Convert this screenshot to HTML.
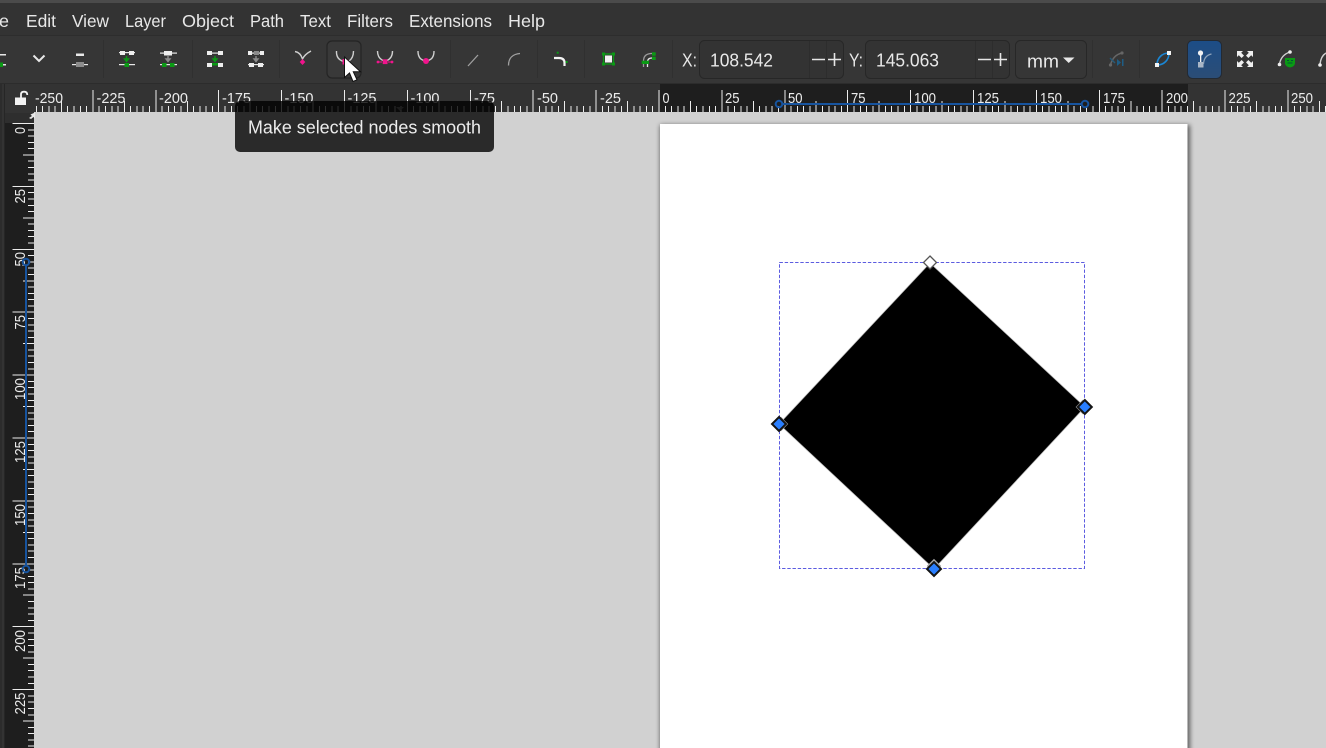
<!DOCTYPE html>
<html><head><meta charset="utf-8"><style>
html,body{margin:0;padding:0;background:#333;overflow:hidden;width:1326px;height:748px}
svg{display:block}
text{font-family:"Liberation Sans",sans-serif}
.m{font-size:17.5px;fill:#e8e8e8}
.r{font-size:15px;fill:#ececec}
.n{font-size:18px;fill:#e8e8e8}
</style></head><body>
<svg width="1326" height="748" viewBox="0 0 1326 748" xmlns="http://www.w3.org/2000/svg">
<defs>
<g id="h" stroke="#ececec" stroke-width="1" shape-rendering="crispEdges">
<path d="M0 90V112M6.29 106V112M12.58 106V112M18.87 106V112M25.16 106V112M31.45 101V112M37.74 106V112M44.03 106V112M50.32 106V112M56.61 106V112"/>
</g>
<g id="v" stroke="#ececec" stroke-width="1" shape-rendering="crispEdges">
<path d="M12.5 0H34M28 6.29H34M28 12.58H34M28 18.87H34M28 25.16H34M23 31.45H34M28 37.74H34M28 44.03H34M28 50.32H34M28 56.61H34"/>
</g>
<filter id="b" x="-10%" y="-10%" width="120%" height="120%"><feGaussianBlur stdDeviation="2.5"/></filter>
<linearGradient id="act" x1="0" y1="0" x2="0" y2="1"><stop offset="0" stop-color="#1c4d87"/><stop offset="1" stop-color="#2b4d76"/></linearGradient>
</defs>

<!-- chrome -->
<rect width="1326" height="748" fill="#333"/>
<rect width="1326" height="3" fill="#4b4b4b"/>
<rect y="35" width="1326" height="1" fill="#2d2d2d"/>
<rect y="36" width="1326" height="47" fill="#363636"/>
<rect y="83" width="1326" height="1" fill="#2c2c2c"/>

<!-- menu -->
<text class="m" x="-1" y="27" textLength="10" lengthAdjust="spacingAndGlyphs">e</text>
<text class="m" x="26" y="27" textLength="30" lengthAdjust="spacingAndGlyphs">Edit</text>
<text class="m" x="72" y="27" textLength="37" lengthAdjust="spacingAndGlyphs">View</text>
<text class="m" x="125" y="27" textLength="41" lengthAdjust="spacingAndGlyphs">Layer</text>
<text class="m" x="182" y="27" textLength="52" lengthAdjust="spacingAndGlyphs">Object</text>
<text class="m" x="250" y="27" textLength="34" lengthAdjust="spacingAndGlyphs">Path</text>
<text class="m" x="300" y="27" textLength="31" lengthAdjust="spacingAndGlyphs">Text</text>
<text class="m" x="347" y="27" textLength="46" lengthAdjust="spacingAndGlyphs">Filters</text>
<text class="m" x="409" y="27" textLength="83" lengthAdjust="spacingAndGlyphs">Extensions</text>
<text class="m" x="508" y="27" textLength="37" lengthAdjust="spacingAndGlyphs">Help</text>

<!-- separators -->
<g fill="#303030">
<rect x="103" y="40" width="1" height="38"/><rect x="192" y="40" width="1" height="38"/><rect x="279" y="40" width="1" height="38"/>
<rect x="450" y="40" width="1" height="38"/><rect x="537" y="40" width="1" height="38"/><rect x="584" y="40" width="1" height="38"/>
<rect x="672" y="40" width="1" height="38"/><rect x="1092" y="40" width="1" height="38"/><rect x="1139" y="40" width="1" height="38"/>
</g>

<!-- align icons -->
<g>
<rect x="0" y="54" width="6" height="1.5" fill="#e8e8e8"/><rect x="0" y="64" width="6" height="1.5" fill="#e8e8e8"/><rect x="0" y="62.5" width="3" height="4.5" fill="#0a9a14"/>
<path d="M33.5 55.5L39 61L44.5 55.5" fill="none" stroke="#e8e8e8" stroke-width="2"/>
<rect x="76" y="53.5" width="8" height="2.5" fill="#e8e8e8"/><rect x="72" y="64" width="16" height="1.2" fill="#e8e8e8"/><rect x="76" y="62" width="8" height="5" fill="#8c8c8c"/>

<rect x="119" y="52" width="16" height="1.2" fill="#e8e8e8"/><rect x="120" y="51" width="5" height="4" fill="#eee"/><rect x="129" y="51" width="5" height="4" fill="#eee"/>
<path d="M126.5 56V59M124.5 59L126.5 61.5L128.5 59Z" stroke="#0a9a14" stroke-width="1.4" fill="#0a9a14"/>
<rect x="119" y="64" width="16" height="1.2" fill="#e8e8e8"/><rect x="124.5" y="63" width="4.5" height="4" fill="#0a9a14"/>

<rect x="160" y="52.5" width="17" height="1.2" fill="#e8e8e8"/><rect x="164" y="51" width="8" height="4.5" fill="#eee"/>
<path d="M168 56V59M166 59L168 61.5L170 59Z" stroke="#8c8c8c" stroke-width="1.4" fill="#8c8c8c"/>
<rect x="160" y="64" width="17" height="1.2" fill="#e8e8e8"/><rect x="162" y="63" width="4.5" height="4" fill="#0a9a14"/><rect x="170" y="63" width="4.5" height="4" fill="#0a9a14"/>

<rect x="207" y="52.5" width="16" height="1.2" fill="#e8e8e8"/><rect x="207" y="51" width="5" height="4" fill="#eee"/><rect x="218" y="51" width="5" height="4" fill="#eee"/>
<path d="M215 56V59M213 59L215 61.5L217 59Z" stroke="#0a9a14" stroke-width="1.4" fill="#0a9a14"/>
<rect x="207" y="64" width="16" height="1.2" fill="#e8e8e8"/><rect x="207" y="63" width="5" height="4" fill="#eee"/><rect x="218" y="63" width="5" height="4" fill="#eee"/><rect x="212" y="63" width="6" height="2.5" fill="#0a9a14"/>

<rect x="248" y="52.5" width="16" height="1.2" fill="#e8e8e8"/><rect x="248" y="51" width="4" height="4" fill="#eee"/><rect x="254" y="51" width="5" height="4" fill="#8c8c8c"/><rect x="260" y="51" width="4" height="4" fill="#eee"/>
<path d="M256 56V59M254 59L256 61.5L258 59Z" stroke="#8c8c8c" stroke-width="1.4" fill="#8c8c8c"/>
<rect x="248" y="64" width="16" height="1.2" fill="#e8e8e8"/><rect x="249" y="63" width="5" height="4" fill="#eee"/><rect x="258" y="63" width="5" height="4" fill="#eee"/>
</g>

<!-- node type icons -->
<rect x="327" y="41" width="34" height="37" rx="5" fill="#393939" stroke="#242424" stroke-width="1.2"/>
<g fill="none" stroke="#cfcfcf" stroke-width="1.4">
<path d="M295 51.5Q300.500 52.500 302.500 59Q304.500 54.500 311 51"/>
<path d="M336.500 51Q336 59.500 344 61.500"/>
<path d="M353.500 51Q353.500 58 349 61"/>
<path d="M377.500 51Q377.500 58 383 60.500"/>
<path d="M392.500 51Q392.500 58 387 60.500"/>
<path d="M418 51Q418 59 424 60.500"/>
<path d="M434 51Q434 59 428 60.500"/>
</g>
<path d="M302.500 59L305.300 62L302.500 65L299.700 62Z" fill="#f0148c"/>
<rect x="342.500" y="59" width="5.500" height="5.500" fill="#f0148c"/>
<rect x="382.700" y="59.300" width="4.800" height="4.800" fill="#f0148c"/>
<path d="M378 62H382M388 62H392" stroke="#f0148c" stroke-width="1.100"/>
<circle cx="378" cy="62" r="1.400" fill="#f0148c"/><circle cx="392" cy="62" r="1.400" fill="#f0148c"/>
<circle cx="426" cy="61" r="3" fill="#f0148c"/>
<path d="M468 66L478 55" stroke="#a0a0a0" stroke-width="1.3" fill="none"/>
<path d="M508.500 65.500C508.500 58 513 54 520 53.500" stroke="#a0a0a0" stroke-width="1.3" fill="none"/>
<path d="M554 58H559Q564.500 58 564.500 63V66" stroke="#f4f4f4" stroke-width="2.200" fill="none"/>
<rect x="556.700" y="51.700" width="2" height="2" fill="#0a9a14"/><rect x="565.700" y="61" width="2" height="2" fill="#0a9a14"/>

<!-- bbox and path icons -->
<rect x="603.500" y="54" width="10" height="10" fill="none" stroke="#0a9a14" stroke-width="1.300"/>
<rect x="602" y="52.500" width="3" height="3" fill="#0a9a14"/><rect x="612" y="52.500" width="3" height="3" fill="#0a9a14"/><rect x="602" y="62.500" width="3" height="3" fill="#0a9a14"/><rect x="612" y="62.500" width="3" height="3" fill="#0a9a14"/>
<rect x="605" y="55.500" width="7" height="7" fill="#f2f2f2"/>
<path d="M643.500 67V61Q643.500 54 651 53.500H654" stroke="#9a9a9a" stroke-width="1.300" fill="none"/>
<path d="M647.500 67V62Q647.500 58 652 58H654" stroke="#e8e8e8" stroke-width="1.300" fill="none"/>
<rect x="652" y="52.300" width="3.700" height="3.400" fill="#0a9a14"/><rect x="652" y="56.700" width="3.700" height="3.300" fill="#0a9a14"/>
<rect x="641.700" y="60.700" width="7.300" height="3.300" fill="#0a9a14"/>

<!-- spin X -->
<text class="n" x="682" y="66.500" textLength="15" lengthAdjust="spacingAndGlyphs">X:</text>
<rect x="699.500" y="40.500" width="144" height="38" rx="5" fill="#333" stroke="#272727"/>
<rect x="809" y="41" width="1" height="37" fill="#2d2d2d"/><rect x="826" y="41" width="1" height="37" fill="#2d2d2d"/>
<text class="n" x="710" y="66.500" textLength="63" lengthAdjust="spacingAndGlyphs">108.542</text>
<path d="M812 59.500H825M828 59.500H841M834.500 53V66" stroke="#e6e6e6" stroke-width="1.600" fill="none"/>
<!-- spin Y -->
<text class="n" x="849" y="66.500" textLength="14" lengthAdjust="spacingAndGlyphs">Y:</text>
<rect x="865.500" y="40.500" width="144" height="38" rx="5" fill="#333" stroke="#272727"/>
<rect x="975" y="41" width="1" height="37" fill="#2d2d2d"/><rect x="992" y="41" width="1" height="37" fill="#2d2d2d"/>
<text class="n" x="876" y="66.500" textLength="63" lengthAdjust="spacingAndGlyphs">145.063</text>
<path d="M978 59.500H991M994 59.500H1007M1000.500 53V66" stroke="#e6e6e6" stroke-width="1.600" fill="none"/>
<!-- unit -->
<rect x="1015.500" y="40.500" width="71" height="38" rx="5" fill="#363636" stroke="#272727"/>
<text class="n" x="1027" y="67.500" textLength="32" lengthAdjust="spacingAndGlyphs">mm</text>
<path d="M1063 57.500H1074.500L1068.700 63Z" fill="#e8e8e8"/>

<!-- right icons -->
<path d="M1110.500 65Q1113 55 1122 53" stroke="#666" stroke-width="1.500" fill="none"/><circle cx="1122" cy="53" r="1.600" fill="#666"/><circle cx="1110.500" cy="65" r="1.600" fill="#666"/>
<path d="M1110 58L1115 63" stroke="#275a78" stroke-width="1.500"/><path d="M1117 59L1121 62.500L1117 66ZM1122 59H1123.500V66H1122Z" fill="#1e5d85"/>
<path d="M1157 65C1157 58 1162 53 1169 53" stroke="#1a86d4" stroke-width="1.600" fill="none"/>
<path d="M1157 65C1164 65 1169 60 1169 53" stroke="#1a86d4" stroke-width="1.600" fill="none"/>
<rect x="1155" y="63" width="4" height="4" fill="#f4f4f4"/><rect x="1167" y="51" width="4" height="4" fill="#f4f4f4"/>
<rect x="1187.500" y="40.500" width="34" height="38" rx="5" fill="url(#act)" stroke="#232a33"/>
<circle cx="1200.500" cy="53" r="2.600" fill="#f2f2f2"/><rect x="1200" y="54" width="1.300" height="9" fill="#f2f2f2"/><rect x="1198" y="62" width="5.500" height="5.500" fill="#a9b6c6"/>
<path d="M1203.500 64Q1204 55.500 1211.500 54" stroke="#8fa3ba" stroke-width="1.200" fill="none"/>
<g fill="#f0f0f0">
<path d="M1237 51H1243L1241.200 52.800L1244 55.600L1241.600 58L1238.800 55.200L1237 57Z"/>
<path d="M1253 51H1247L1248.800 52.800L1246 55.600L1248.400 58L1251.200 55.200L1253 57Z"/>
<path d="M1237 67H1243L1241.200 65.200L1244 62.400L1241.600 60L1238.800 62.800L1237 61Z"/>
<path d="M1253 67H1247L1248.800 65.200L1246 62.400L1248.400 60L1251.200 62.800L1253 61Z"/>
</g>
<path d="M1279.500 64Q1281 55 1290 52" stroke="#d0d0d0" stroke-width="1.400" fill="none"/><circle cx="1279.500" cy="64.500" r="1.800" fill="#eee"/><circle cx="1290" cy="52" r="1.800" fill="#eee"/>
<path d="M1285 58H1295V63Q1295 66.500 1290 67.500Q1285 66.500 1285 63Z" fill="#0a9a14"/><path d="M1287 60.500H1289M1291 60.500H1293M1287.500 63H1292.500" stroke="#053" stroke-width="1"/>
<path d="M1320 64Q1321 56 1326 53" stroke="#d0d0d0" stroke-width="1.400" fill="none"/><circle cx="1320" cy="65" r="1.800" fill="#eee"/>

<!-- canvas -->
<rect x="34" y="112" width="1292" height="636" fill="#d1d1d1"/>
<rect x="660" y="125" width="530" height="640" fill="#000" opacity=".55" filter="url(#b)"/>
<rect x="660" y="124" width="527.500" height="624" fill="#fff"/>

<!-- h ruler bg -->
<rect x="660" y="84" width="528" height="28" fill="#1e1e1e"/>
<!-- h ticks -->
<use href="#h" x="30"/><use href="#h" x="92.900"/><use href="#h" x="155.800"/><use href="#h" x="218.700"/><use href="#h" x="281.600"/><use href="#h" x="344.500"/><use href="#h" x="407.400"/><use href="#h" x="470.300"/><use href="#h" x="533.200"/><use href="#h" x="596.100"/><use href="#h" x="659"/><use href="#h" x="721.900"/><use href="#h" x="784.800"/><use href="#h" x="847.700"/><use href="#h" x="910.600"/><use href="#h" x="973.500"/><use href="#h" x="1036.400"/><use href="#h" x="1099.300"/><use href="#h" x="1162.200"/><use href="#h" x="1225.100"/><use href="#h" x="1288"/>
<rect x="0" y="84" width="35" height="28" fill="#333"/>
<!-- h labels -->
<g>
<text class="r" x="35" y="103" textLength="28" lengthAdjust="spacingAndGlyphs">-250</text>
<text class="r" x="96.500" y="103" textLength="29" lengthAdjust="spacingAndGlyphs">-225</text>
<text class="r" x="159" y="103" textLength="29" lengthAdjust="spacingAndGlyphs">-200</text>
<text class="r" x="222" y="103" textLength="29" lengthAdjust="spacingAndGlyphs">-175</text>
<text class="r" x="284.500" y="103" textLength="29" lengthAdjust="spacingAndGlyphs">-150</text>
<text class="r" x="347.500" y="103" textLength="29" lengthAdjust="spacingAndGlyphs">-125</text>
<text class="r" x="410.500" y="103" textLength="29" lengthAdjust="spacingAndGlyphs">-100</text>
<text class="r" x="474" y="103" textLength="21" lengthAdjust="spacingAndGlyphs">-75</text>
<text class="r" x="537" y="103" textLength="21" lengthAdjust="spacingAndGlyphs">-50</text>
<text class="r" x="600" y="103" textLength="21" lengthAdjust="spacingAndGlyphs">-25</text>
<text class="r" x="662.500" y="103" textLength="7" lengthAdjust="spacingAndGlyphs">0</text>
<text class="r" x="725" y="103" textLength="14.500" lengthAdjust="spacingAndGlyphs">25</text>
<text class="r" x="788" y="103" textLength="14.500" lengthAdjust="spacingAndGlyphs">50</text>
<text class="r" x="851" y="103" textLength="14.500" lengthAdjust="spacingAndGlyphs">75</text>
<text class="r" x="914" y="103" textLength="22" lengthAdjust="spacingAndGlyphs">100</text>
<text class="r" x="977" y="103" textLength="22" lengthAdjust="spacingAndGlyphs">125</text>
<text class="r" x="1040" y="103" textLength="22" lengthAdjust="spacingAndGlyphs">150</text>
<text class="r" x="1103" y="103" textLength="22" lengthAdjust="spacingAndGlyphs">175</text>
<text class="r" x="1166" y="103" textLength="22" lengthAdjust="spacingAndGlyphs">200</text>
<text class="r" x="1228.500" y="103" textLength="22" lengthAdjust="spacingAndGlyphs">225</text>
<text class="r" x="1291" y="103" textLength="22" lengthAdjust="spacingAndGlyphs">250</text>
</g>
<path d="M396 107H404L400 111Z" fill="#8a8a8a"/>

<!-- v ruler -->
<rect x="0" y="84" width="2" height="664" fill="#2c2c2c"/>
<rect x="4" y="84" width="1" height="664" fill="#262626"/>
<rect x="5" y="123" width="29" height="625" fill="#1e1e1e"/>
<rect x="5" y="113" width="29" height="10" fill="#2e2e2e"/>
<use href="#v" y="123.500"/><use href="#v" y="186.400"/><use href="#v" y="249.300"/><use href="#v" y="312.200"/><use href="#v" y="375.100"/><use href="#v" y="438"/><use href="#v" y="500.900"/><use href="#v" y="563.800"/><use href="#v" y="626.700"/><use href="#v" y="689.600"/>
<g>
<text class="r" transform="translate(25 134) rotate(-90)" textLength="7" lengthAdjust="spacingAndGlyphs">0</text>
<text class="r" transform="translate(25 203.500) rotate(-90)" textLength="14.500" lengthAdjust="spacingAndGlyphs">25</text>
<text class="r" transform="translate(25 266.500) rotate(-90)" textLength="14.500" lengthAdjust="spacingAndGlyphs">50</text>
<text class="r" transform="translate(25 329.500) rotate(-90)" textLength="14.500" lengthAdjust="spacingAndGlyphs">75</text>
<text class="r" transform="translate(25 400) rotate(-90)" textLength="22" lengthAdjust="spacingAndGlyphs">100</text>
<text class="r" transform="translate(25 463) rotate(-90)" textLength="22" lengthAdjust="spacingAndGlyphs">125</text>
<text class="r" transform="translate(25 526) rotate(-90)" textLength="22" lengthAdjust="spacingAndGlyphs">150</text>
<text class="r" transform="translate(25 589) rotate(-90)" textLength="22" lengthAdjust="spacingAndGlyphs">175</text>
<text class="r" transform="translate(25 652) rotate(-90)" textLength="22" lengthAdjust="spacingAndGlyphs">200</text>
<text class="r" transform="translate(25 714.500) rotate(-90)" textLength="22" lengthAdjust="spacingAndGlyphs">225</text>
</g>

<!-- ruler markers -->
<path d="M782 104H1082" stroke="#17549f" stroke-width="2"/>
<circle cx="779" cy="104" r="3.300" fill="none" stroke="#17549f" stroke-width="2"/><circle cx="1085" cy="104" r="3.300" fill="none" stroke="#17549f" stroke-width="2"/>
<path d="M26 265V566" stroke="#17549f" stroke-width="2"/>
<circle cx="26" cy="262" r="3.300" fill="none" stroke="#17549f" stroke-width="2"/><circle cx="26" cy="569" r="3.300" fill="none" stroke="#17549f" stroke-width="2"/>

<!-- lock -->
<rect x="15" y="97.500" width="11" height="7.500" fill="#f2f2f2"/>
<path d="M21 97.500V94.500Q21 91.700 24 91.700Q27.300 91.700 27.300 95" fill="none" stroke="#f2f2f2" stroke-width="1.800"/>
<path d="M29 118L32 116L30.500 114.500L35 112.500V118.500L33.500 117L31 119Z" fill="#e8e8e8"/>

<!-- selection -->
<path d="M930 263L1085 407L934 569L779 424Z" fill="#000" stroke="#bdbdbd" stroke-width=".7"/>
<rect x="779.500" y="262.500" width="305" height="306" fill="none" stroke="#5c5ce0" stroke-width="1" stroke-dasharray="3.400 1.800"/>
<path d="M930 256L936.500 262.500L930 269L923.500 262.500Z" fill="#fff" stroke="#555" stroke-width="1.300"/>
<path d="M781 417.500L787.500 424L781 430.500L774.500 424Z" fill="#fff" stroke="#999" stroke-width="1"/>
<path d="M1082.800 400.500L1089.300 407L1082.800 413.500L1076.300 407Z" fill="#fff" stroke="#999" stroke-width="1"/>
<path d="M934 559.500L940.500 566L934 572.500L927.500 566Z" fill="#fff" stroke="#999" stroke-width="1"/>
<path d="M779 417L786 424L779 431L772 424Z" fill="#2a7fff" stroke="#141414" stroke-width="2"/>
<path d="M1084.800 400L1091.800 407L1084.800 414L1077.800 407Z" fill="#2a7fff" stroke="#141414" stroke-width="2"/>
<path d="M934 562L941 569L934 576L927 569Z" fill="#2a7fff" stroke="#141414" stroke-width="2"/>

<!-- tooltip -->
<rect x="235" y="101" width="259" height="51" rx="5" fill="#000" fill-opacity=".8"/>
<text x="248" y="133.500" font-size="18" fill="#ececec" textLength="233" lengthAdjust="spacingAndGlyphs">Make selected nodes smooth</text>

<!-- cursor -->
<path d="M344.500 57V77.500L349.500 73L353 81.500L357 79.800L353.300 71.800H360.500Z" fill="#fff" stroke="#111" stroke-width="1"/>
</svg>
</body></html>
